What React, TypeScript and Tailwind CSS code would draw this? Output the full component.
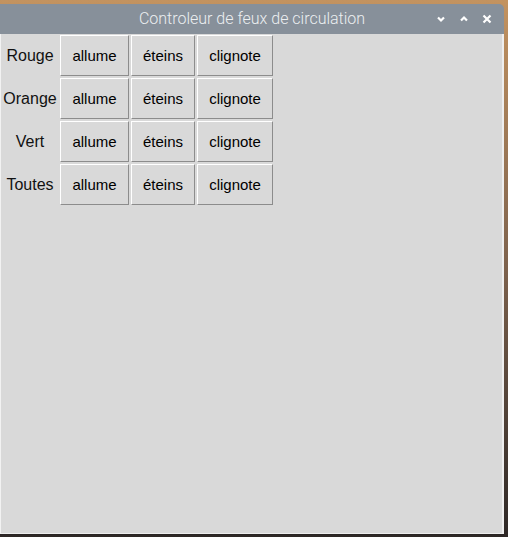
const ROWS = ["Rouge", "Orange", "Vert", "Toutes"];
const ACTIONS = ["allume", "éteins", "clignote"];

const TkButton = ({ label }: { label: string }) => (
	<button className="h-[41px] bg-[#d9d9d9] border border-t-white border-l-white border-r-[#8c8c8c] border-b-[#8c8c8c] text-[15px] text-black font-['Liberation_Sans',Arial,sans-serif] leading-none pb-[1px]">
		{label}
	</button>
);

export default function App() {
	return (
		<div className="w-[508px] h-[537px] bg-gradient-to-b from-[#c39360] via-[#7d624d] to-[#2e2826] pt-[4px] overflow-hidden">
			<div className="w-[504px] h-[531px] flex flex-col border-b border-b-[#2a2524]">
				{/* Title bar */}
				<div className="h-[30px] bg-[#87909a] rounded-tr-[5px] flex items-center relative">
					<span className="flex-1 text-center text-[16px] font-light text-[#eceff1] font-['Roboto',sans-serif]">
						Controleur de feux de circulation
					</span>
					<div className="absolute right-[12px] top-[10px] flex items-center gap-[13px] text-white">
						<svg width="10" height="10" viewBox="0 0 10 10">
							<path d="M2 3.5 L5 6.5 L8 3.5" stroke="white" strokeWidth="2.2" fill="none" />
						</svg>
						<svg width="10" height="10" viewBox="0 0 10 10">
							<path d="M2 6.5 L5 3.5 L8 6.5" stroke="white" strokeWidth="2.2" fill="none" />
						</svg>
						<svg width="10" height="10" viewBox="0 0 10 10">
							<path d="M1.5 1.5 L8.5 8.5 M8.5 1.5 L1.5 8.5" stroke="white" strokeWidth="2.2" fill="none" />
						</svg>
					</div>
				</div>

				{/* Window content */}
				<div className="flex-1 bg-[#d9d9d9] border-l border-l-[#f2f2f2] border-r-2 border-r-[#eeeeee] border-b border-b-[#eeeeee] pt-[1px]">
					<div className="grid grid-cols-[57px_69px_64px_76px] gap-x-[2px] gap-y-[2px] w-max">
						{ROWS.map((row) => (
							<div key={row} className="contents">
								<div className="h-[41px] flex items-center justify-center pl-[1px] text-[16px] text-[#111] font-['Liberation_Sans',Arial,sans-serif]">
									{row}
								</div>
								{ACTIONS.map((a) => (
									<TkButton key={a} label={a} />
								))}
							</div>
						))}
					</div>
				</div>
			</div>
		</div>
	);
}
